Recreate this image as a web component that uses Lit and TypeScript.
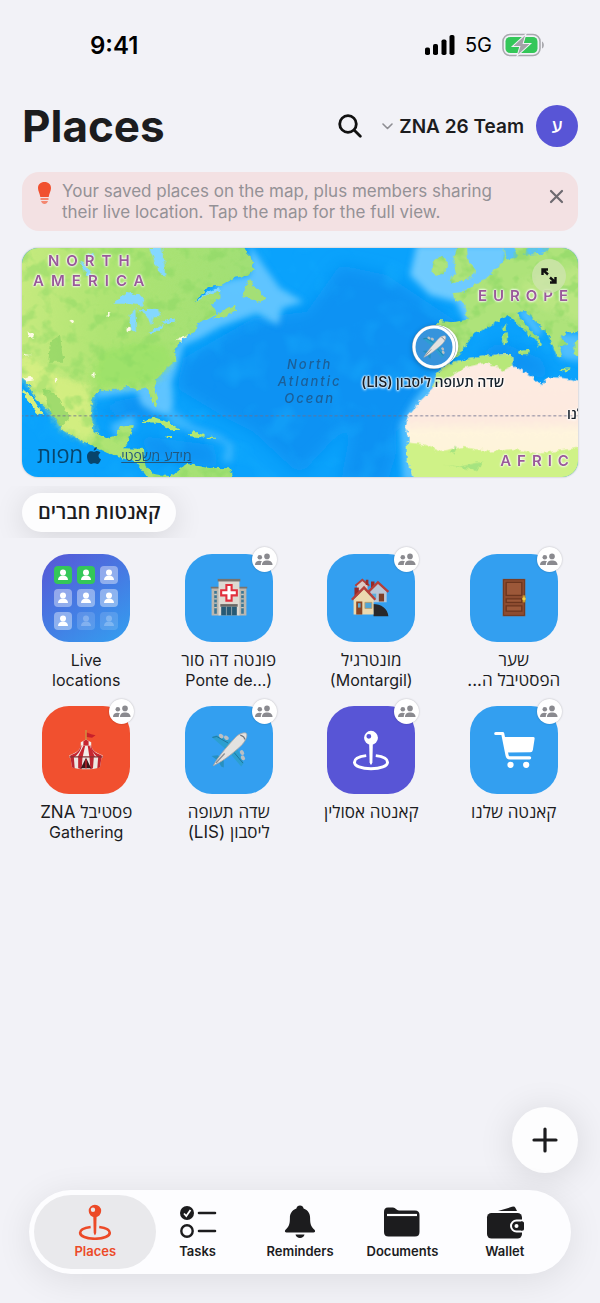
import { LitElement, html, css, svg } from "lit";
import { customElement, property } from "lit/decorators.js";

const FONT = css`Inter, "Open Sans", "Liberation Sans", sans-serif`;

const reset = css`
  * { box-sizing: border-box; }
  button { font: inherit; color: inherit; background: none; border: 0; padding: 0; margin: 0; cursor: pointer; }
  svg { display: block; }
`;

const plane = svg`
  <path d="M3 8 L9 6 L26 13 L32 20 L40 38 L37 42 L25 28 L17 20 Z" fill="#2c9fd0"/>
  <path d="M4 8.500 L9 7.500 L22 15" stroke="#1d6f96" stroke-width="1" fill="none"/>
  <path d="M29 26 L39 38" stroke="#1d6f96" stroke-width="1"/>
  <path d="M3 30 L10 29 L17 34 L17 43 L14 42 L11 36 Z" fill="#2790c0"/>
  <ellipse cx="14" cy="7" rx="3" ry="2.200" transform="rotate(35 14 7)" fill="#b9bfc4"/>
  <ellipse cx="20" cy="9" rx="3" ry="2.200" transform="rotate(35 20 9)" fill="#b9bfc4"/>
  <ellipse cx="38" cy="26" rx="3" ry="2.200" transform="rotate(55 38 26)" fill="#b9bfc4"/>
  <ellipse cx="39" cy="32" rx="3" ry="2.200" transform="rotate(55 39 32)" fill="#b9bfc4"/>
  <path d="M5 41 C9 33 18 22 30 9 C34 4 42 2 43 4 C45 7 41 14 37 18 C25 29 14 37 5 41 Z" fill="#e3e2e0" stroke="#a5a6a8" stroke-width="1"/>
  <path d="M36 6 C39 7 41 9 41 11" stroke="#70757c" stroke-width="1.500" fill="none"/>
  <path d="M8 38 L18 27" stroke="#8d8f93" stroke-width="1.500"/>`;

const hospital = svg`
  <path d="M3 11h10v32H3zM33 11h10v32H33z" fill="#bdb7ae"/>
  <path d="M2 10h11v2H2zM33 10h11v2H33z" fill="#77736e"/>
  <path d="M6 15h3v26H6zM37 15h3v26h-3z" fill="#3d7693"/>
  <path d="M6 19h3M6 24h3M6 29h3M6 34h3M37 19h3M37 24h3M37 29h3M37 34h3" stroke="#d0cac1" stroke-width="1.500"/>
  <path d="M11 3h24v40H11z" fill="#ded9d1"/><path d="M10 1h26v3H10z" fill="#77736e"/>
  <path d="M20 8h6v6h6v6h-6v6h-6v-6h-6v-6h6z" fill="#fff" stroke="#e22f3d" stroke-width="2.400"/>
  <path d="M13 30h20v3H13z" fill="#6c6864"/><path d="M14 33h18v10H14z" fill="#275a75"/>
  <path d="M20 33v10M26 33v10" stroke="#9aabb4" stroke-width="1"/>`;

const houses = svg`
  <path d="M7 8l6-5 6 5v6H7z" fill="#dcc9c2"/><path d="M5 9l8-7 8 7" stroke="#b5403a" stroke-width="2.200" fill="none"/>
  <path d="M17 2h3v6h-3zM23 4h4v8h-4z" fill="#982a28"/>
  <path d="M22 15l9-9 10 9v13H22z" fill="#b9c6d6"/><path d="M20 16L31 5l12 11" stroke="#b5403a" stroke-width="2.600" fill="none"/>
  <path d="M32 18h6v9h-6z" fill="#7e3f27"/><path d="M24 18h5v5h-5z" fill="#5daedb"/>
  <path d="M25 30c10 0 17 5 18 14H26z" fill="#28282b"/>
  <path d="M4 11h5v10H4z" fill="#982a28"/>
  <path d="M3 25l12-13 11 13v17H3z" fill="#ecd9b0"/><path d="M1 25l14-14 13 14" stroke="#b5403a" stroke-width="2.800" fill="none"/>
  <path d="M6 27h7v15H6z" fill="#8a4526"/><path d="M8 29h3v5H8z" fill="#5daedb"/>
  <path d="M16 28h8v7h-8z" fill="#4fa5d8" stroke="#b99c6a"/>`;

const door = svg`
  <path d="M10 1h26v43H10z" fill="#8d4c30"/><path d="M11 2h24v41H11z" stroke="#6f3820" fill="none"/>
  <path d="M14 5h18v15H14zM14 24h18v4H14zM14 32h18v6H14z" fill="#9c5839" stroke="#6b351e" stroke-width="1.500"/>
  <path d="M33 20h3v8h-3z" fill="#c79b2d"/><circle cx="34.500" cy="24" r="2" fill="#f2cf45"/>`;

const tent = svg`
  <path d="M23 0v13" stroke="#c49a44" stroke-width="1.500"/><path d="M24 3l5 2 5 1-4 3-6-1z" fill="#c91f2b"/>
  <path d="M17 14l6-3 6 3v4H17z" fill="#f2ede9"/><path d="M20 13l3-2 3 2v5h-6z" fill="#c72630"/>
  <path d="M17 18h12c1 5 5 8 13 11v3H4v-3c8-3 12-6 13-11z" fill="#f2ede9"/>
  <path d="M20 18h2l-3 14h-6zM25 18h2l7 14h-7zM17 18c-1 6-6 9-12 11v3h4c5-5 8-8 9-14zM29 18c1 6 6 9 12 11v3h-4c-5-5-8-8-9-14z" fill="#c72630"/>
  <path d="M5 31h36l-2 12c-10 3-22 3-32 0z" fill="#ece7e2"/>
  <path d="M5 31h4l1 13-3-1zM14 31h5l-1 14-4-1zM27 31h5l-1 13-3 1zM37 31h4l-2 12-3 1z" fill="#bd2530"/>
  <path d="M4 31h38" stroke="#843034" stroke-width="1.500"/>
  <path d="M23 32l6 12H17z" fill="#3a1719"/><path d="M23 34v10" stroke="#a81e27" stroke-width="2"/>`;

const pin = svg`
  <path fill-rule="evenodd" d="M23 1a8 8 0 1 1 0 16a8 8 0 0 1 0-16zM20.500 4.500a2.800 2.800 0 1 0 0 5.600a2.800 2.800 0 0 0 0-5.600z" fill="currentColor"/>
  <path d="M20.900 16h4.200l-.5 21q-1.600 6-3.200 0z" fill="currentColor"/>
  <path d="M17.500 29.500C9 30.500 4 33.500 4 37C4 41.500 12 44.500 23 44.500S42 41.500 42 37C42 33.500 37 30.500 28.500 29.500" stroke="currentColor" stroke-width="3.400" fill="none"/>`;

const cart = svg`
  <path d="M2 4h8l5 25c.4 2 1.500 3 3 3h23" stroke="#fff" stroke-width="3.600" stroke-linecap="round" stroke-linejoin="round" fill="none"/>
  <path d="M11 8h34q2 0 1.700 2l-2 13q-.4 2.500-3 2.500l-27 .5z" fill="#fff"/>
  <circle cx="19" cy="40" r="3.600" fill="#fff"/><circle cx="37" cy="40" r="3.600" fill="#fff"/>`;

const person = svg`<circle cx="9" cy="6.500" r="3" fill="#fff"/><path d="M4 14c0-3 2-4.500 5-4.500s5 1.500 5 4.500z" fill="#fff"/>`;

type Line = { text: string; dir: "rtl" | "ltr" };
type Tile = { tone: string; art: unknown; lines: Line[] };
const he = (text: string): Line => ({ text, dir: "rtl" });
const en = (text: string): Line => ({ text, dir: "ltr" });

const TILES: Tile[] = [
  { tone: "live", art: null, lines: [en("Live"), en("locations")] },
  { tone: "blue", art: hospital, lines: [he("פונטה דה סור"), en("Ponte de...)")] },
  { tone: "blue", art: houses, lines: [he("מונטרגיל"), en("(Montargil)")] },
  { tone: "blue", art: door, lines: [he("שער"), he("הפסטיבל ה...")] },
  { tone: "red", art: tent, lines: [he("פסטיבל ZNA"), en("Gathering")] },
  { tone: "blue", art: plane, lines: [he("שדה תעופה"), he("ליסבון (LIS)")] },
  { tone: "violet", art: pin, lines: [he("קאנטה אסולין")] },
  { tone: "blue", art: cart, lines: [he("קאנטה שלנו")] },
];

@customElement("status-bar")
export class StatusBar extends LitElement {
  static styles = [reset, css`
    :host { display: flex; justify-content: space-between; align-items: center; height: 42px; margin-top: 24px; padding: 0 56px 0 90px; color: #000; }
    .time { font-size: 24px; font-weight: 600; }
    .right { display: flex; align-items: center; gap: 10px; font-size: 20px; }
  `];
  render() {
    return html`
      <span class="time">9:41</span>
      <span class="right">
        <svg width="30" height="20" viewBox="0 0 30 20" aria-hidden="true">
          <rect x="0" y="12.500" width="5" height="7.500" rx="1.800"/><rect x="8" y="9" width="5" height="11" rx="1.800"/>
          <rect x="16.500" y="4.500" width="5" height="15.500" rx="1.800"/><rect x="24.500" y="0" width="5" height="20" rx="1.800"/>
        </svg>
        <span>5G</span>
        <svg width="42" height="24" viewBox="0 0 42 24" aria-hidden="true">
          <rect x="1" y="1.500" width="37" height="21" rx="7" fill="none" stroke="#a9a9ae" stroke-width="1.600"/>
          <rect x="3.500" y="4" width="32" height="16" rx="4.500" fill="#34c759"/>
          <path d="M40 8.500c2.500 1 2.500 6 0 7z" fill="#a9a9ae"/>
          <path d="M23 2.500L11.500 13h7L16 21.500 27.500 11h-7z" fill="#a3a3a8" stroke="#f2f2f7" stroke-width="2" paint-order="stroke"/>
        </svg>
      </span>`;
  }
}

@customElement("places-map")
export class PlacesMap extends LitElement {
  static styles = [reset, css`
    :host { display: block; position: relative; aspect-ratio: 556 / 229; border-radius: 16px; overflow: hidden; box-shadow: 0 0 2px rgba(0, 0, 0, 0.3); }
    .terrain { width: 100%; height: 100%; }
    .label { position: absolute; white-space: nowrap; transform: translate(0, -50%); }
    .region { font-size: 15px; font-weight: 600; line-height: 20px; letter-spacing: 6px; text-align: center; color: #995a99;
      text-shadow: 0 0 2px #fff, 0 0 2px #fff, 0 0 3px #fff; }
    .na { left: 2%; top: 10%; letter-spacing: 7px; }
    .eu { left: 82%; top: 21%; }
    .af { left: 86%; top: 93%; }
    .ocean { left: 46%; top: 58%; font-size: 13px; font-style: italic; font-weight: 500; line-height: 17px; letter-spacing: 2px; text-align: center; color: #1c5f98; }
    .spot { font-size: 14px; font-weight: 600; color: #17202a; text-shadow: 0 0 2px #fff, 0 0 2px #fff, 0 0 2px #fff, 0 1px 3px #fff; }
    .lis { left: 61%; top: 58%; }
    .ours { left: 98%; top: 72%; }
    .ring { position: absolute; left: 70%; top: 33%; width: 48px; height: 46px; filter: drop-shadow(0 1px 2px rgba(0, 0, 0, 0.25)); }
    .expand { position: absolute; top: 11px; right: 12px; width: 34px; height: 34px; border-radius: 50%; background: rgba(205, 228, 170, 0.85); display: grid; place-items: center; }
    .credit { position: absolute; left: 15px; bottom: 8px; display: flex; align-items: center; gap: 20px; color: #08456c; }
    .brand { display: flex; align-items: center; gap: 4px; font-size: 22px; line-height: 28px; }
    .legal { font-size: 14px; color: #23577c; }
  `];
  render() {
    return html`
      <svg class="terrain" viewBox="6 9 1668 687" preserveAspectRatio="xMidYMid slice" aria-hidden="true">
        <defs>
          <filter id="coast" x="0" y="0" width="100%" height="100%">
            <feTurbulence type="fractalNoise" baseFrequency="0.07" numOctaves="2" seed="4"/>
            <feDisplacementMap in="SourceGraphic" scale="16" xChannelSelector="R" yChannelSelector="G"/>
          </filter>
          <filter id="mottle" x="0" y="0" width="100%" height="100%" color-interpolation-filters="sRGB">
            <feTurbulence type="fractalNoise" baseFrequency="0.02" numOctaves="3" seed="11"/>
            <feColorMatrix values="0 0 0 0 .52  0 0 0 0 .84  0 0 0 0 .38  5 0 0 0 -2.5"/>
            <feComposite in2="SourceAlpha" operator="in"/>
          </filter>
          <filter id="waves" x="0" y="0" width="100%" height="100%" color-interpolation-filters="sRGB">
            <feTurbulence type="fractalNoise" baseFrequency="0.012" numOctaves="2" seed="8"/>
            <feColorMatrix values="0 0 0 0 .1  0 0 0 0 .7  0 0 0 0 1  3 0 0 0 -1.5"/>
          </filter>
          <filter id="soft"><feGaussianBlur stdDeviation="9"/></filter>
          <filter id="haze"><feGaussianBlur stdDeviation="24"/></filter>
          <linearGradient id="west" x2="1" y2="0"><stop offset="0" stop-color="#c6ea7e"/><stop offset=".35" stop-color="#afe473"/><stop offset="1" stop-color="#a0df74"/></linearGradient>
          <linearGradient id="sahara" x2="0" y2="1"><stop offset="0" stop-color="#fdece3"/><stop offset=".5" stop-color="#fdeadf"/><stop offset=".6" stop-color="#fff5dd"/><stop offset="1" stop-color="#fdf3d5"/></linearGradient>
        </defs>
        <rect width="1700" height="720" fill="#0aa2fc"/>
        <g filter="url(#haze)" fill="#0b92f3">
          <path d="M490 340L700 220L860 200L960 60L1100 90L1250 190L1340 250L1230 420L1130 560L980 540L840 690L700 560L620 520L470 430Z"/>
          <path d="M1010 460L1110 420L1130 620L1100 720L960 720Z"/>
          <path d="M1360 340L1440 290L1560 340L1600 400L1500 390Z"/>
          <path d="M230 480L380 450L430 510L300 520ZM340 570L580 600L600 670L400 640Z"/>
        </g>
        <rect width="1700" height="720" filter="url(#waves)" opacity=".35"/>
        <g fill="#6ecaff" filter="url(#soft)">
          <path d="M690 0L730 60L780 130L850 170L785 190L775 240L710 205L600 245L540 280L490 300L470 370L455 410L460 480L440 510L400 500L365 480L350 440L230 455L205 470L240 430L400 400L470 300L520 230L600 110L690 90Z" opacity=".85"/>
          <path d="M1190 0L1170 90L1230 150L1310 170L1340 240L1370 240L1400 130L1460 60L1470 0Z"/>
          <path d="M270 540L340 510L350 545L290 580Z" opacity=".6"/>
          <path d="M1250 380L1180 470L1140 540L1150 710L1210 710L1180 560L1260 420Z" opacity=".75"/>
          <path d="M430 470L520 540L600 570L640 600L635 650L610 650L620 600L450 540Z" opacity=".45"/>
          <path d="M1600 260L1690 270L1690 350L1620 340ZM1490 200L1520 190L1570 260L1550 275Z" opacity=".7"/>
        </g>
        <g filter="url(#coast)">
          <g id="north">
            <path id="amer" d="M0 0H668L692 40L702 72L684 92L642 98L604 120L562 128L524 172L562 145L600 140L602 160L575 176L592 205L560 222L532 235L525 262L502 272L478 292L462 320L466 348L440 370L408 400L402 425L414 458L408 486L394 466L382 426L352 434L324 422L292 434L240 434L216 462L212 512L224 562L256 580L290 572L300 545L338 540L325 590L312 610L372 612L376 660L402 688L450 694L500 656L560 668L630 670L642 720H400L350 654L262 624L204 596L124 552L118 530L90 500L48 462L16 406L0 400Z" fill="url(#west)"/>
            <path d="M8 432L38 458L72 514L54 506L18 462Z" fill="#d8ef7b"/>
            <path d="M582 222L606 194L645 180L648 194L606 222Z" fill="#a4df76"/>
            <path d="M664 156L690 98L702 124L736 160L720 174L692 160Z" fill="#a4df76"/>
            <path d="M364 530L400 516L442 530L484 554L452 556L420 534ZM500 572L520 558L556 572L550 578ZM566 575H588V581H566ZM440 573H456V579H440Z" fill="#b6e86f"/>
          </g>
          <path d="M0 300L30 340L110 390L200 420L216 462L212 512L224 562L200 590L124 552L90 500L20 406L0 400Z" fill="#d9f083" opacity=".8" filter="url(#soft)"/>
          <path d="M240 320L350 290L440 300L460 350L400 415L240 430L215 400Z" fill="#9be268" opacity=".8" filter="url(#soft)"/>
          <path d="M66 430L110 450L150 520L120 545L90 500ZM90 290L120 270L130 350L85 350Z" fill="#94d668" opacity=".8"/>
        </g>
        <use href="#amer" filter="url(#mottle)" opacity=".4"/>
        <g filter="url(#coast)">
          <g fill="#84d8ff">
            <path d="M388 9H426L432 48L436 92L420 88L404 50Z"/>
            <path d="M280 176L322 140L368 154L370 182L324 176Z"/><path d="M328 212L346 190L348 262L334 256Z"/>
            <path d="M348 196L414 194L422 214L402 214L394 240L376 204Z"/><path d="M382 264L428 240L432 248L390 268Z"/><path d="M424 230L464 220L462 230L430 236Z"/>
            <path d="M180 46L208 74L220 105L192 80ZM205 20L225 34L212 40ZM524 174L560 142L596 126L600 138L560 150Z"/>
          </g>
          <g fill="#fffbe6"><circle cx="266" cy="208" r="5"/><circle cx="157" cy="230" r="6"/><circle cx="326" cy="252" r="7"/><circle cx="32" cy="270" r="9"/><circle cx="222" cy="390" r="5"/><circle cx="107" cy="405" r="5"/><path d="M470 284L504 270L480 290ZM8 400L30 392L42 406L18 410ZM8 326L34 330L8 334Z"/></g>
          <g id="europe" fill="#aee37a">
            <path d="M1234 82L1240 46L1268 32L1282 58L1270 88L1246 92Z"/>
            <path d="M1290 106L1310 80L1300 46L1314 0H1340L1344 46L1366 74L1356 98L1310 108L1294 116Z"/>
            <path d="M1454 0L1448 50L1424 76L1394 104L1360 122L1328 142L1298 144L1302 160L1332 178L1342 224L1300 232L1256 228L1244 244L1250 300L1254 338L1298 344L1320 326L1346 292L1362 266L1410 246L1440 224L1466 212L1492 236L1530 274L1552 284L1556 306L1542 316L1566 300L1556 280L1530 256L1492 208L1510 192L1560 244L1584 268L1608 330L1624 336L1616 304L1644 300L1622 276L1640 262L1690 262V0Z"/>
            <path d="M1494 318L1530 314L1526 328L1500 328ZM1448 270L1460 264L1462 294L1450 298ZM1450 242L1458 236V258H1450ZM1620 372L1650 370V376H1620Z"/>
            <path d="M1662 290L1690 280V344L1664 330Z"/>
          </g>
          <path d="M1452 0L1460 46L1500 30L1570 26L1600 0Z" fill="#59c3fa"/>
          <path d="M1482 0H1524L1516 26L1492 34Z" fill="#aee37a"/>
          <path d="M1500 110L1690 60V230L1600 200L1520 170Z" fill="#c1e886" opacity=".65" filter="url(#soft)"/>
          <path d="M1250 386L1280 358L1340 344L1400 332L1474 328L1480 362L1532 392L1566 420L1582 396L1620 398L1700 410V720H1190L1160 640L1166 580L1154 544L1164 512L1200 468L1240 430Z" fill="url(#sahara)"/>
          <path d="M1250 386L1280 358L1340 344L1400 332L1474 328L1480 362L1450 376L1400 352L1340 366L1290 392L1240 426Z" fill="#b7e879"/>
          <path d="M1160 592L1210 598L1260 618L1330 606L1410 620L1480 612L1560 626L1700 604V720H1190L1160 640Z" fill="#cff287"/>
          <path d="M1288 625L1310 600L1304 625ZM1270 660L1320 665L1390 650L1370 675Z" fill="#a6e480"/>
        </g>
        <use href="#europe" filter="url(#mottle)" opacity=".5"/>
        <path d="M0 513H1700" stroke="#6e6f8e" stroke-width="3.500" stroke-dasharray="9 7" opacity=".55"/>
      </svg>
      <span class="label region na">NORTH<br>AMERICA</span>
      <span class="label region eu">EUROPE</span>
      <span class="label region af">AFRIC</span>
      <span class="label ocean">North<br>Atlantic<br>Ocean</span>
      <svg class="ring" viewBox="0 0 48 46" aria-hidden="true">
        <circle cx="27" cy="22" r="19" fill="#3794dc" stroke="#fff" stroke-width="2.500"/>
        <circle cx="25" cy="22" r="20" fill="#3794dc" stroke="#fff" stroke-width="2"/>
        <circle cx="23" cy="23" r="20" fill="#3794dc" stroke="#7f98aa" stroke-width="4"/>
        <circle cx="23" cy="23" r="20" fill="#3794dc" stroke="#fff" stroke-width="3"/>
        <g transform="translate(10 10) scale(.57)">${plane}</g>
      </svg>
      <span class="label spot lis" dir="rtl">שדה תעופה ליסבון (LIS)</span>
      <span class="label spot ours" dir="ltr">לנו</span>
      <button class="expand" aria-label="Expand map">
        <svg width="16" height="16" viewBox="0 0 16 16" fill="none" stroke="#111" stroke-width="2.400">
          <path d="M1.500 7V1.500H7M1.500 1.500L7 6.500M14.500 9v5.500H9M14.500 14.500L9 9.500"/>
        </svg>
      </button>
      <div class="credit">
        <span class="brand"><span>מפות</span>
          <svg width="14" height="17" viewBox="0 0 14 17" fill="currentColor" aria-hidden="true"><path d="M9.800 0c.2 1.800-1.300 3.700-3.100 3.700C6.500 2 8.100.2 9.800 0zM7 4.800c.8 0 1.700-.8 3.200-.8 1.300 0 2.500.7 3.200 1.800-2.800 1.600-2.300 5.300.6 6.400C13.200 14.600 11.900 17 10.200 17c-1.200 0-1.600-.7-3-.7s-1.900.7-3 .7C1.900 17 0 12.900 0 9.600 0 6.200 2.100 4.200 4.200 4.200c1.300 0 2.200.6 2.800.6z"/></svg>
        </span>
        <a class="legal" href="#legal">מידע משפטי</a>
      </div>`;
  }
}

@customElement("place-tile")
export class PlaceTile extends LitElement {
  @property({ attribute: false }) tile!: Tile;
  static styles = [reset, css`
    :host { display: block; }
    .tile { display: flex; flex-direction: column; align-items: center; gap: 8px; width: 100%; }
    .face { position: relative; width: 88px; height: 88px; border-radius: 27px; display: grid; place-items: center; color: #fff; }
    .blue { background: #339ff0; }
    .red { background: #f1502f; }
    .violet { background: #5855d6; }
    .live { background: linear-gradient(145deg, #5856d6, #339ff0); }
    .art { width: 40px; height: 40px; overflow: visible; }
    .badge { position: absolute; top: -7px; right: -4px; width: 25px; height: 25px; border-radius: 50%; background: #fff; box-shadow: 0 0 2px rgba(0, 0, 0, 0.25); display: grid; place-items: center; }
    .people { display: grid; grid-template-columns: repeat(3, 18px); gap: 5px; }
    .slot { height: 18px; border-radius: 4px; background: rgba(255, 255, 255, 0.4); }
    .on { background: #34c759; }
    .off { opacity: 0.35; }
    .name { display: flex; flex-direction: column; font-size: 16px; line-height: 20px; color: #1c1c1e; white-space: nowrap; }
    .rtl { font-size: 17px; }
  `];
  render() {
    const { tone, art, lines } = this.tile;
    return html`
      <button class="tile">
        <span class="face ${tone}">
          ${art
            ? html`<svg class="art" viewBox="0 0 46 46" aria-hidden="true">${art}</svg>
                <span class="badge"><svg width="18" height="13" viewBox="0 0 18 13" fill="#8a8a8f" aria-hidden="true">
                  <circle cx="4.800" cy="4.200" r="2.300"/><path d="M0 12c0-3 2-4.300 4.500-4.300 1 0 1.800.2 2.500.6C6 9.300 5.800 10.500 5.800 12z"/>
                  <circle cx="12" cy="3.400" r="2.800"/><path d="M7 12c0-3.300 2-4.500 5-4.500s5.500 1.200 5.500 4.500z"/></svg></span>`
            : html`<span class="people">${Array.from({ length: 9 }, (_, i) => html`
                <svg class="slot ${i < 2 ? "on" : i > 6 ? "off" : ""}" viewBox="0 0 18 18" aria-hidden="true">${person}</svg>`)}</span>`}
        </span>
        <span class="name">${lines.map((l) => html`<span class=${l.dir} dir=${l.dir}>${l.text}</span>`)}</span>
      </button>`;
  }
}

const TABS = [
  { label: "Places", icon: svg`<g transform="translate(2 0) scale(.78)">${pin}</g>` },
  { label: "Tasks", icon: svg`
      <circle cx="9" cy="9" r="7" fill="currentColor"/><path d="M6 9.500l2.300 2.500L12.500 6" stroke="#fff" stroke-width="1.800" fill="none"/>
      <circle cx="9" cy="27" r="5.700" fill="none" stroke="currentColor" stroke-width="2.400"/>
      <path d="M21 9h16M21 27h16" stroke="currentColor" stroke-width="2.600" stroke-linecap="round"/>` },
  { label: "Reminders", icon: svg`
      <path d="M20 1.500c2 0 3.200 1.200 3.600 3 4.400 1.500 6.500 5 6.500 9.500 0 6 .8 8.500 4.600 12 .9 1.200.3 2.500-1.300 2.500H6.600c-1.600 0-2.200-1.300-1.300-2.500 3.800-3.500 4.600-6 4.600-12 0-4.500 2.100-8 6.500-9.500.4-1.800 1.600-3 3.600-3z" fill="currentColor"/>
      <path d="M15.500 30.500h9c-.4 2.200-2.200 3.500-4.500 3.500s-4.100-1.300-4.500-3.500z" fill="currentColor"/>` },
  { label: "Documents", icon: svg`
      <path d="M2 8c0-3 1.200-4.500 4-4.500h5c2.500 0 3.500 3 6 3h16c3 0 4.500 1.500 4.500 4.500v17c0 3-1.500 4.500-4.500 4.500H6.500C3.500 32.500 2 31 2 28z" fill="currentColor"/>
      <path d="M5 11h30" stroke="#fff" stroke-width="2.200"/>` },
  { label: "Wallet", icon: svg`
      <path d="M13 7L27 2.800q2.500-.7 3.500 1.200l1.500 3z" fill="currentColor"/>
      <rect x="2" y="9" width="35" height="25.500" rx="4.500" fill="currentColor"/>
      <path d="M40 16.500h-8.500a5.500 5.500 0 0 0 0 11H40z" fill="currentColor" stroke="#fdfdff" stroke-width="2"/>
      <path d="M37.500 15.500H40v13h-2.500z" fill="#fdfdff"/><path d="M36 17.500h1.500q1.500 0 1.500 1.500v6q0 1.500-1.500 1.500H36z" fill="currentColor"/>
      <circle cx="31.500" cy="22" r="2" fill="#fff"/>` },
];

@customElement("tab-bar")
export class TabBar extends LitElement {
  static styles = [reset, css`
    :host { display: block; margin: 17px 29px 29px; }
    .bar { display: flex; height: 84px; padding: 5px 15px; border-radius: 42px; background: #fdfdff; box-shadow: 0 6px 36px rgba(0, 0, 0, 0.09); }
    .tab { flex: 1 1 0; min-width: 0; display: flex; flex-direction: column; align-items: center; justify-content: center; gap: 2px; font-size: 13px; font-weight: 600; line-height: 18px; color: #1c1c1e; }
    .active { margin: 0 -10px; flex-basis: 20px; border-radius: 37px; background: #e9e9ec; color: #ec4a28; }
  `];
  render() {
    return html`<nav class="bar">${TABS.map((t, i) => html`
      <button class="tab ${i === 0 ? "active" : ""}"><svg width="40" height="36" viewBox="0 0 40 36" aria-hidden="true">${t.icon}</svg>${t.label}</button>`)}</nav>`;
  }
}

@customElement("app-root")
export class AppRoot extends LitElement {
  static styles = [reset, css`
    :host { display: flex; flex-direction: column; min-height: 100vh; background: #f2f2f7; color: #1c1c1e; font-family: ${FONT}; overflow: hidden; }
    .head { display: flex; align-items: center; height: 60px; margin: 30px 22px 0; }
    .title { flex: 1; margin: 0; font-size: 44px; line-height: 56px; font-weight: 700; }
    .team { display: flex; align-items: center; gap: 6px; margin-left: 20px; font-size: 19px; font-weight: 600; }
    .avatar { width: 42px; height: 42px; margin-left: 12px; border-radius: 50%; background: #5855d6; color: #fff; font-size: 18px; font-weight: 600; }
    .tip { display: flex; align-items: flex-start; gap: 10px; margin: 16px 22px 17px; padding: 9px 14px 8px 15px; border-radius: 17px; background: #f3e1e3; }
    .tip-text { flex: 1; margin: 0; padding-right: 28px; font-size: 17px; line-height: 21px; color: #949196; }
    .bulb { margin-top: 1px; }
    .close { margin-top: 8px; }
    places-map { margin: 0 22px; }
    .chips { margin-top: 9px; padding: 7px 22px 6px; overflow: hidden; }
    .chip { height: 39px; padding: 0 16px; border-radius: 20px; background: #fdfdfe; box-shadow: 0 5px 30px rgba(0, 0, 0, 0.12); font-size: 20px; font-weight: 600; line-height: 39px; }
    .grid { display: grid; grid-template-columns: repeat(4, 1fr); row-gap: 16px; margin: 16px 15px 0; }
    .space { flex: 1; min-height: 24px; }
    .add { align-self: flex-end; width: 66px; height: 66px; margin-right: 22px; border-radius: 50%; background: #fdfdfe; box-shadow: 0 4px 36px rgba(0, 0, 0, 0.12); display: grid; place-items: center; }
  `];
  render() {
    return html`
      <status-bar></status-bar>
      <header class="head">
        <h1 class="title">Places</h1>
        <button aria-label="Search"><svg width="24" height="24" viewBox="0 0 24 24" fill="none" stroke="#111" stroke-width="2.800" stroke-linecap="round"><circle cx="10" cy="10" r="8.300"/><path d="M16.300 16.300L22.300 22.300"/></svg></button>
        <button class="team"><svg width="11" height="7" viewBox="0 0 11 7" fill="none" stroke="#8e8e93" stroke-width="1.600" stroke-linecap="round" stroke-linejoin="round"><path d="M1 1l4.500 4.500L10 1"/></svg>ZNA 26 Team</button>
        <button class="avatar">ע</button>
      </header>
      <section class="tip">
        <svg class="bulb" width="15" height="22" viewBox="0 0 15 22" aria-hidden="true">
          <path d="M7.500 0C11.500 0 14 2.500 14 6c0 3.600-1.800 5-2.300 9H3.300C2.800 11 1 9.600 1 6 1 2.500 3.500 0 7.500 0z" fill="#f1502f"/>
          <path d="M3.500 16h8v2h-8zM4 19h7q-1 3-3.500 3T4 19z" fill="#f4866f"/>
        </svg>
        <p class="tip-text">Your saved places on the map, plus members sharing their live location. Tap the map for the full view.</p>
        <button class="close" aria-label="Dismiss"><svg width="15" height="15" viewBox="0 0 15 15" stroke="#6d6a70" stroke-width="2.200" stroke-linecap="round"><path d="M2 2l11 11M13 2L2 13"/></svg></button>
      </section>
      <places-map></places-map>
      <div class="chips"><button class="chip">קאנטות חברים</button></div>
      <main class="grid">${TILES.map((t) => html`<place-tile .tile=${t}></place-tile>`)}</main>
      <div class="space"></div>
      <button class="add" aria-label="Add place"><svg width="26" height="26" viewBox="0 0 26 26" stroke="#1c1c1e" stroke-width="3.200" stroke-linecap="round"><path d="M13 2v22M2 13h22"/></svg></button>
      <tab-bar></tab-bar>`;
  }
}
